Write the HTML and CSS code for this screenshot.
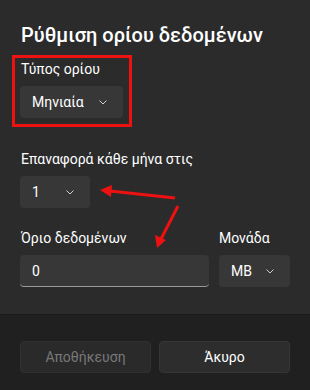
FILE: index.html
```html
<!DOCTYPE html>
<html lang="el">
<head>
    <meta charset="UTF-8">
    <title>Ρύθμιση ορίου δεδομένων</title>
    <link rel="stylesheet" href="styles.css">
</head>
<body>
<div class="dialog">
    <div class="content">
        <h2 class="title">Ρύθμιση ορίου δεδομένων</h2>

        <div class="field field-type">
            <div class="label">Τύπος ορίου</div>
            <div class="select select-type">
                <span>Μηνιαία</span>
                <svg class="chevron" viewBox="0 0 8 5"><path d="M0.5 0.5 L4 4 L7.5 0.5"/></svg>
            </div>
        </div>

        <div class="field field-reset">
            <div class="label">Επαναφορά κάθε μήνα στις</div>
            <div class="select select-day">
                <span>1</span>
                <svg class="chevron" viewBox="0 0 8 5"><path d="M0.5 0.5 L4 4 L7.5 0.5"/></svg>
            </div>
        </div>

        <div class="row">
            <div class="field field-limit">
                <div class="label">Όριο δεδομένων</div>
                <div class="input">0</div>
            </div>
            <div class="field field-unit">
                <div class="label">Μονάδα</div>
                <div class="select select-unit">
                    <span>MB</span>
                    <svg class="chevron" viewBox="0 0 8 5"><path d="M0.5 0.5 L4 4 L7.5 0.5"/></svg>
                </div>
            </div>
        </div>
    </div>

    <div class="footer">
        <button class="btn" disabled>Αποθήκευση</button>
        <button class="btn">Άκυρο</button>
    </div>

    <div class="highlight"></div>
    <svg class="arrows" viewBox="0 0 310 390">
        <line x1="175" y1="198" x2="110" y2="191"/>
        <polygon points="100,190 112,185 111,197"/>
        <line x1="178" y1="206" x2="161" y2="239"/>
        <polygon points="157,248 155,235 166,240"/>
    </svg>
</div>
</body>
</html>
```

FILE: styles.css
```css
body {
    margin: 0;
    font-family: Roboto, "Noto Sans", sans-serif;
    background-color: #2b2b2b;
    color: #ffffff;
}

.dialog {
    position: relative;
    width: 310px;
    height: 390px;
    display: flex;
    flex-direction: column;
    overflow: hidden;
}

.content {
    flex: 1;
    padding: 21px 20px 0 20px;
    background-color: #2b2b2b;
}

.title {
    margin: 0 0 0 1px;
    font-size: 20px;
    font-weight: 500;
    line-height: 28px;
}

.label {
    font-size: 14px;
    line-height: 20px;
    margin-bottom: 7px;
    margin-left: 1px;
}

.field-type {
    margin-top: 10px;
}

.field-reset {
    margin-top: 31px;
}

.row {
    display: flex;
    gap: 10px;
    margin-top: 20px;
}

.select {
    display: flex;
    align-items: center;
    justify-content: space-between;
    height: 32px;
    box-sizing: border-box;
    padding: 0 16px 0 12px;
    background-color: #373737;
    border-radius: 4px;
    font-size: 14px;
}

.select-type {
    width: 103px;
}

.select-day {
    width: 70px;
}

.select-unit {
    width: 71px;
}

.chevron {
    width: 8px;
    height: 5px;
    fill: none;
    stroke: #cfcfcf;
    stroke-width: 1;
}

.field-limit {
    width: 189px;
}

.field-unit .label {
    margin-left: 0;
}

.input {
    height: 32px;
    box-sizing: border-box;
    padding: 0 12px;
    display: flex;
    align-items: center;
    background-color: #373737;
    border-radius: 4px;
    border-bottom: 1px solid #9a9a9a;
    font-size: 14px;
}

.footer {
    height: 76px;
    box-sizing: border-box;
    padding: 26px 20px 0 20px;
    background-color: #202020;
    border-top: 1px solid #1c1c1c;
    display: grid;
    grid-template-columns: 1fr 1fr;
    gap: 8px;
    align-items: start;
}

.btn {
    height: 32px;
    font-family: inherit;
    font-size: 14px;
    color: #ffffff;
    background-color: #2d2d2d;
    border: 1px solid #353535;
    border-radius: 4px;
}

.btn:disabled {
    color: #787878;
    background-color: #2a2a2a;
    border-color: #303030;
}

/* annotation overlay */
.highlight {
    position: absolute;
    left: 12px;
    top: 55px;
    width: 114px;
    height: 66px;
    border: 3px solid #ee1111;
}

.arrows {
    position: absolute;
    left: 0;
    top: 0;
    width: 310px;
    height: 390px;
}

.arrows line {
    stroke: #ee1111;
    stroke-width: 3;
}

.arrows polygon {
    fill: #ee1111;
}
```
